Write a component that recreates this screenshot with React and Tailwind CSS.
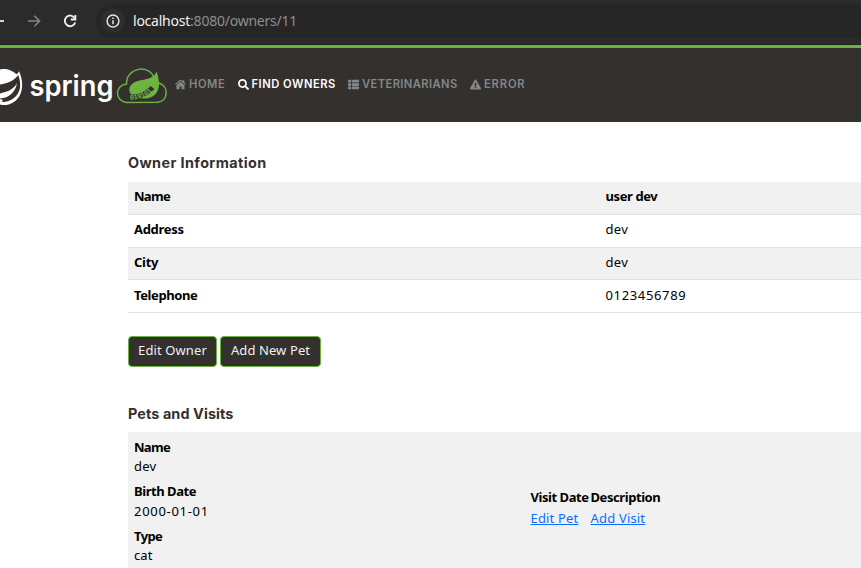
import React from "react";
import { FaSearch, FaThList, FaExclamationTriangle } from "react-icons/fa";

const body = "font-['Noto_Sans','Open_Sans',sans-serif]";

function HomeIcon({ className }) {
  return (
    <svg className={className} viewBox="0 0 12 12" fill="currentColor">
      <path d="M6 3.100 10.400 6.800v3.800q0 .6-.6.6H7.100V8.100H4.900v3.100H2.200q-.6 0-.6-.6V6.800Z" />
      <path d="M6 .9q.4 0 .8.300L8.500 2.600V1.300h1.700v2.800L12 5.600l-.7.9L6 2.100.7 6.500 0 5.600l5.200-4.400Q5.600.9 6 .9Z" />
    </svg>
  );
}

function BrowserBar() {
  return (
    <div className="flex h-[45px] shrink-0 items-start border-b border-[#202022] bg-[#2b2b2b]">
      <div className="flex h-[41px] w-[96px] shrink-0 items-center">
        <div className="h-[2px] w-1 bg-[#d6d6d6]" />
        <svg className="ml-[23px]" width="14" height="14" viewBox="0 0 14 14" fill="none" stroke="#858585" strokeWidth="1.6">
          <path d="M1 7h11M7.3 1.7 12.6 7l-5.3 5.3" />
        </svg>
        <svg className="ml-[22px]" width="14" height="14" viewBox="0 0 14 14" fill="none" stroke="#eeeeee" strokeWidth="1.9">
          <path d="M11.7 4.2A5.3 5.3 0 1 0 12.2 8.4" />
          <path d="M12.3 1v4.5H7.8" />
        </svg>
      </div>
      <div className="mt-1 flex h-[34px] flex-1 items-center rounded-l-full bg-[#262626] pl-[5px]">
        <div className="flex size-6 items-center justify-center rounded-full bg-[#2e2e2e]">
          <svg width="14" height="14" viewBox="0 0 14 14" fill="none" stroke="#e3e3e3" strokeWidth="1.5">
            <circle cx="7" cy="7" r="5.9" />
            <path d="M7 6.2v4M7 3.6v1.5" />
          </svg>
        </div>
        <div className="ml-2 flex text-[14px] leading-[34px] tracking-[-0.230px] text-[#8f8f8f] font-['Noto_Sans',sans-serif]">
          <span className="text-[#f2f2f2]">localhost</span>
          <span>:8080/owners/11</span>
        </div>
      </div>
    </div>
  );
}

function Logo() {
  return (
    <svg className="block shrink-0" width="168" height="44" viewBox="0 64 168 44">
      <path fill="#fff" d="M0 69.500C6 68 12 70 16.500 74.300Q18.200 73.400 19 71.300C22.800 79 23.500 89 19.500 96C15 103.500 7 106.500 0 104.500Z" />
      <path fill="#34302d" d="M0 84.500C8 83.500 14 80.500 18.300 75C21.300 84 20.800 90 16.500 95.500C12.500 100.500 6 102.500 1.500 101.800L3 100L0 99Z" />
      <path fill="#fff" d="M17 83C13.500 90 7 91.500 0 93.500V98.500C9 98 15.500 92 17 83Z" />
      <text x="29.500" y="95.500" textLength="84" lengthAdjust="spacingAndGlyphs" fontSize="28" fontWeight="600" fill="#fff" fontFamily="Inter, sans-serif">spring</text>
      <path fill="none" stroke="#6db33f" strokeWidth="1.500" d="M126.500 102.400C114 101 115 84.500 126.500 84C126 67 150 64 154 78Q155.500 82 159.500 83.200C169 86.500 168.500 101 157.500 102.300Z" />
      <path fill="#6db33f" d="M156.800 71.700C158.800 79 161 87 156 93.500C150.500 100.500 138 99.500 131.500 95C127.500 90.500 129 85 135 82C142 78.500 151.500 81 156.800 71.700Z" />
      <path fill="none" stroke="#34302d" strokeWidth="5" d="M129.500 97.200C139 97.200 147 94 152.500 87.500" />
      <path id="leaf-digits" fill="none" d="M130 99.700C140 99.500 150 96 156.500 86.500" />
      <text fontSize="7" fontWeight="700" fill="#6db33f" fontFamily="Liberation Mono, monospace" letterSpacing="-0.200">
        <textPath href="#leaf-digits">019101</textPath>
      </text>
    </svg>
  );
}

const links = [
  { label: "Home", Icon: HomeIcon, item: "w-[62.500px] text-[#838789]", text: "tracking-[0.550px]" },
  { label: "Find Owners", Icon: FaSearch, item: "w-[110.500px] text-white", text: "tracking-[0.510px]" },
  { label: "Veterinarians", Icon: FaThList, item: "w-[122px] text-[#838789]", text: "tracking-[0.400px]" },
  { label: "Error", Icon: FaExclamationTriangle, item: "text-[#838789]", text: "tracking-[0.850px]" },
];

function Navbar() {
  return (
    <nav className="flex h-[77px] shrink-0 items-start border-t-[3px] border-[#6db33f] bg-[#34302d] pt-4">
      <Logo />
      <div className="ml-[7px] mt-[13px] flex">
        {links.map(({ label, Icon, item, text }) => (
          <a key={label} className={`flex h-4 shrink-0 items-center gap-[3px] text-[11.200px] font-semibold uppercase font-['Inter',sans-serif] ${item}`}>
            <Icon className="mb-px size-[11px] shrink-0" />
            <span className={`whitespace-nowrap ${text}`}>{label}</span>
          </a>
        ))}
      </div>
    </nav>
  );
}

const rows = [
  ["Name", "user dev", "h-[33px] bg-[#f1f1f1] pt-[5px]", "font-bold tracking-[-0.400px]", "tracking-[-0.700px]"],
  ["Address", "dev", "h-[33px] pt-[5px]", "tracking-[0.300px]", "tracking-[-0.300px]"],
  ["City", "dev", "h-[32px] bg-[#f1f1f1] pt-[5px]", "tracking-[0.300px]", "tracking-[-0.300px]"],
  ["Telephone", "0123456789", "h-[33px] pt-1.5", "tracking-[0.650px]", "tracking-[-0.400px]"],
];

function Button({ children, className }) {
  return (
    <button className={`h-[31px] rounded-[4px] border border-[#6db33f] bg-[#34302d] pb-0.5 text-[13px] text-[#f1f1f1] whitespace-nowrap ${className}`}>
      {children}
    </button>
  );
}

function Heading({ children, className }) {
  return <h2 className={`text-[14.400px] leading-[18px] font-bold text-[#34302d] font-['Inter',sans-serif] ${className}`}>{children}</h2>;
}

export default function App() {
  return (
    <div className={`flex h-[568px] w-[861px] flex-col overflow-hidden bg-white text-[13px] leading-[19.200px] text-black ${body}`}>
      <BrowserBar />
      <Navbar />
      <main className="flex flex-1 flex-col pl-32">
        <Heading className="mt-8 tracking-[0.400px]">Owner Information</Heading>
        <div className="mt-[10px]">
          {rows.map(([label, value, row, cell, head]) => (
            <div key={label} className={`flex border-b border-[#dee2e6] pl-1.5 ${row}`}>
              <div className={`w-[471.500px] font-bold ${head}`}>{label}</div>
              <div className={cell}>{value}</div>
            </div>
          ))}
        </div>
        <div className="mt-[23px] flex gap-[3px]">
          <Button className="w-[89px] tracking-[0.100px]">Edit Owner</Button>
          <Button className="w-[101px] tracking-[0.100px]">Add New Pet</Button>
        </div>
        <Heading className="mt-[38px] tracking-[0.100px]">Pets and Visits</Heading>
        <div className="mt-[9px] flex flex-1 bg-[#f1f1f1] pl-1.5 pt-1.5">
          <dl className="w-[396.500px]">
            <dt className="font-bold tracking-[-0.700px]">Name</dt>
            <dd className="mb-[5.600px] tracking-[0.200px]">dev</dd>
            <dt className="mb-[0.600px] font-bold tracking-[-0.450px]">Birth Date</dt>
            <dd className="mb-[6px] tracking-[0.700px]">2000-01-01</dd>
            <dt className="-mb-[0.600px] font-bold tracking-[-0.600px]">Type</dt>
            <dd className="tracking-[0.100px]">cat</dd>
          </dl>
          <div className="mt-[50px] grid h-10 grid-cols-[60px_80px] gap-y-[2px] whitespace-nowrap">
            <div className="font-bold tracking-[-0.450px]">Visit Date</div>
            <div className="font-bold tracking-[-0.430px]">Description</div>
            <a className="tracking-[0.180px] text-[#0d6efd] underline">Edit Pet</a>
            <a className="tracking-[0.180px] text-[#0d6efd] underline">Add Visit</a>
          </div>
        </div>
      </main>
    </div>
  );
}
